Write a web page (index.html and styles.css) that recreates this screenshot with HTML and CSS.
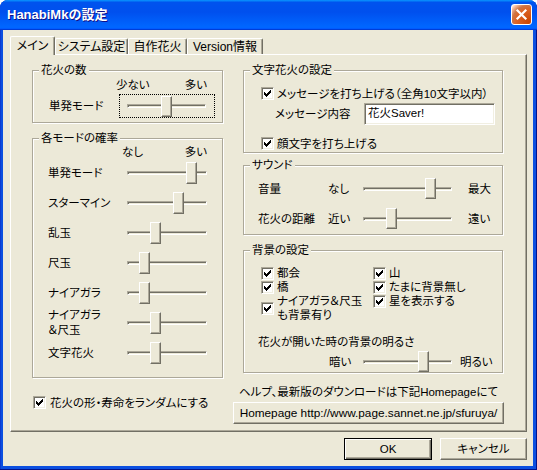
FILE: index.html
```html
<!DOCTYPE html>
<html lang="ja">
<head>
<meta charset="utf-8">
<title>HanabiMkの設定</title>
<link rel="stylesheet" href="styles.css">
</head>
<body>
<div class="window">
  <div class="titlebar">
    <span class="title">HanabiMkの設定</span>
    <span class="close"><svg width="13" height="13" viewBox="0 0 13 13"><path d="M2.5 2.5 L10.5 10.5 M10.5 2.5 L2.5 10.5" stroke="#fff" stroke-width="2.2" stroke-linecap="square"/></svg></span>
  </div>
  <div class="client">
    <div class="tabs">
      <div class="tab active tab-main">メイン</div>
      <div class="tab tab-sys">システム設定</div>
      <div class="tab tab-own">自作花火</div>
      <div class="tab tab-ver">Version情報</div>
    </div>
    <div class="panel">
      <div class="col">
        <div class="group g-count">
          <span class="legend">花火の数</span>
          <div class="scale-head count-head"><span>少ない</span><span>多い</span></div>
          <div class="count-row">
            <span class="count-label">単発モード</span>
            <div class="slider focus"><div class="track"></div><div class="thumb thumb-focus" style="left:41px"></div></div>
          </div>
        </div>
        <div class="group g-rate">
          <span class="legend">各モードの確率</span>
          <div class="scale-head rate-head"><span>なし</span><span>多い</span></div>
          <div class="srow"><span class="slabel">単発モード</span><div class="slider rate"><div class="track"></div><div class="thumb" style="left:59px"></div></div></div>
          <div class="srow"><span class="slabel">スターマイン</span><div class="slider rate"><div class="track"></div><div class="thumb" style="left:46px"></div></div></div>
          <div class="srow"><span class="slabel">乱玉</span><div class="slider rate"><div class="track"></div><div class="thumb" style="left:23px"></div></div></div>
          <div class="srow"><span class="slabel">尺玉</span><div class="slider rate"><div class="track"></div><div class="thumb" style="left:12px"></div></div></div>
          <div class="srow"><span class="slabel">ナイアガラ</span><div class="slider rate"><div class="track"></div><div class="thumb" style="left:12px"></div></div></div>
          <div class="srow"><span class="slabel two-line">ナイアガラ<br>＆尺玉</span><div class="slider rate"><div class="track"></div><div class="thumb" style="left:23px"></div></div></div>
          <div class="srow"><span class="slabel">文字花火</span><div class="slider rate"><div class="track"></div><div class="thumb" style="left:23px"></div></div></div>
        </div>
        <div class="check random">
          <span class="cb"><svg width="7" height="7" viewBox="0 0 7 7"><path d="M0 2h1v1h1v1h1v-1h1v-1h1v-1h1v-1h1v3h-1v1h-1v1h-1v1h-1v1h-1v-1h-1v-1h-1z"/></svg></span>
          <span>花火の形・寿命をランダムにする</span>
        </div>
      </div>

      <div class="col">
        <div class="group g-text">
          <span class="legend">文字花火の設定</span>
          <div class="check text-check first">
            <span class="cb"><svg width="7" height="7" viewBox="0 0 7 7"><path d="M0 2h1v1h1v1h1v-1h1v-1h1v-1h1v-1h1v3h-1v1h-1v1h-1v1h-1v1h-1v-1h-1v-1h-1z"/></svg></span>
            <span>メッセージを打ち上げる（全角10文字以内）</span>
          </div>
          <div class="msg-row">
            <span class="msg-label">メッセージ内容</span>
            <div class="input">花火Saver!</div>
          </div>
          <div class="check text-check last">
            <span class="cb"><svg width="7" height="7" viewBox="0 0 7 7"><path d="M0 2h1v1h1v1h1v-1h1v-1h1v-1h1v-1h1v3h-1v1h-1v1h-1v1h-1v1h-1v-1h-1v-1h-1z"/></svg></span>
            <span>顔文字を打ち上げる</span>
          </div>
        </div>

        <div class="group g-sound">
          <span class="legend">サウンド</span>
          <div class="snd-row first">
            <span class="snd-label">音量</span>
            <span class="snd-min">なし</span>
            <div class="slider wide"><div class="track"></div><div class="thumb thumb-sm" style="left:62px"></div></div>
            <span class="snd-max">最大</span>
          </div>
          <div class="snd-row second">
            <span class="snd-label">花火の距離</span>
            <span class="snd-min">近い</span>
            <div class="slider wide"><div class="track"></div><div class="thumb thumb-sm" style="left:23px"></div></div>
            <span class="snd-max">遠い</span>
          </div>
        </div>

        <div class="group g-bg">
          <span class="legend">背景の設定</span>
          <div class="bg-grid">
            <div class="check bg-item">
              <span class="cb"><svg width="7" height="7" viewBox="0 0 7 7"><path d="M0 2h1v1h1v1h1v-1h1v-1h1v-1h1v-1h1v3h-1v1h-1v1h-1v1h-1v1h-1v-1h-1v-1h-1z"/></svg></span>
              <span>都会</span>
            </div>
            <div class="check bg-item">
              <span class="cb"><svg width="7" height="7" viewBox="0 0 7 7"><path d="M0 2h1v1h1v1h1v-1h1v-1h1v-1h1v-1h1v3h-1v1h-1v1h-1v1h-1v1h-1v-1h-1v-1h-1z"/></svg></span>
              <span>山</span>
            </div>
            <div class="check bg-item">
              <span class="cb"><svg width="7" height="7" viewBox="0 0 7 7"><path d="M0 2h1v1h1v1h1v-1h1v-1h1v-1h1v-1h1v3h-1v1h-1v1h-1v1h-1v1h-1v-1h-1v-1h-1z"/></svg></span>
              <span>橋</span>
            </div>
            <div class="check bg-item">
              <span class="cb"><svg width="7" height="7" viewBox="0 0 7 7"><path d="M0 2h1v1h1v1h1v-1h1v-1h1v-1h1v-1h1v3h-1v1h-1v1h-1v1h-1v1h-1v-1h-1v-1h-1z"/></svg></span>
              <span>たまに背景無し</span>
            </div>
            <div class="check bg-item two">
              <span class="cb"><svg width="7" height="7" viewBox="0 0 7 7"><path d="M0 2h1v1h1v1h1v-1h1v-1h1v-1h1v-1h1v3h-1v1h-1v1h-1v1h-1v1h-1v-1h-1v-1h-1z"/></svg></span>
              <span class="two-text">ナイアガラ＆尺玉<br>も背景有り</span>
            </div>
            <div class="check bg-item">
              <span class="cb"><svg width="7" height="7" viewBox="0 0 7 7"><path d="M0 2h1v1h1v1h1v-1h1v-1h1v-1h1v-1h1v3h-1v1h-1v1h-1v1h-1v1h-1v-1h-1v-1h-1z"/></svg></span>
              <span>星を表示する</span>
            </div>
          </div>
          <div class="bright-label">花火が開いた時の背景の明るさ</div>
          <div class="bright-row">
            <span class="bright-min">暗い</span>
            <div class="slider wide"><div class="track"></div><div class="thumb thumb-sm" style="left:55px"></div></div>
            <span class="bright-max">明るい</span>
          </div>
        </div>

        <div class="help">ヘルプ、最新版のダウンロードは下記Homepageにて</div>
        <div class="btn homepage">Homepage http://www.page.sannet.ne.jp/sfuruya/</div>
      </div>
    </div>
    <div class="buttons">
      <div class="btn default btn-ok">OK</div>
      <div class="btn btn-cancel">キャンセル</div>
    </div>
  </div>
</div>
</body>
</html>
```
FILE: styles.css
```css
* { box-sizing: border-box; }
html, body { margin: 0; padding: 0; background: #ffffff; }
body {
  font-family: "Liberation Sans", "Noto Sans CJK JP", sans-serif;
  font-size: 11.5px;
  line-height: 12px;
  color: #000;
  font-feature-settings: "palt" 1;
}
.window {
  width: 537px;
  height: 470px;
  display: flex;
  flex-direction: column;
  background: #0b4fe0;
  border-radius: 8px 8px 0 0;
  overflow: hidden;
  box-shadow: inset -1px -1px 0 #00138c, inset 1px 0 0 #0c3bd0;
}
.titlebar {
  height: 30px;
  flex: none;
  display: flex;
  align-items: center;
  justify-content: space-between;
  padding: 0 5px 1px 7px;
  background: linear-gradient(180deg, #0997ff, #0053ee 8%, #0050ee 40%, #0066ff 88%, #0066ff 93%, #005bff 95%, #003dd7 96%, #003dd7);
}
.title {
  color: #fff;
  font-weight: bold;
  font-size: 13px;
  line-height: 14px;
  text-shadow: 1px 1px 0 #0f1089;
  font-feature-settings: normal;
}
.close {
  width: 21px;
  height: 21px;
  border: 1px solid #fff;
  border-radius: 3px;
  display: flex;
  align-items: center;
  justify-content: center;
  background: radial-gradient(circle at 90% 90%, #cc4600 0, #dc6527 55%, #cd7546 70%, #ffccb2 90%, #fff 100%);
}
.client {
  flex: 1;
  margin: 0 4px 4px 3px;
  background: #ece9d8;
  padding: 6px 6px 0 7px;
  display: flex;
  flex-direction: column;
}
.tabs {
  display: flex;
  align-items: flex-end;
  height: 18px;
  position: relative;
  z-index: 1;
}
.tab {
  height: 16px;
  display: flex;
  align-items: center;
  justify-content: center;
  border-top: 1px solid #fff;
  border-left: 1px solid #fff;
  border-right: 1px solid #716f64;
  box-shadow: inset -1px 0 0 #aca899;
  border-radius: 2px 2px 0 0;
  background: #ece9d8;
  padding-top: 1px;
  white-space: nowrap;
  font-size: 12px;
}
.tab.active { height: 19px; margin-bottom: -1px; padding-top: 0; padding-bottom: 1px; }
.tab-main { width: 45px; }
.tab-sys { width: 73px; }
.tab-own { width: 59px; }
.tab-ver { width: 76px; }

.panel {
  height: 378px;
  flex: none;
  border: 1px solid;
  border-color: #fff #716f64 #716f64 #fff;
  box-shadow: inset -1px -1px 0 #aca899;
  display: grid;
  grid-template-columns: 192px 261px;
  column-gap: 19px;
  padding-left: 21px;
  align-items: start;
}
.col { display: flex; flex-direction: column; }

.group {
  position: relative;
  width: calc(100% - 1px);
  border: 1px solid #aca899;
  box-shadow: inset 1px 1px 0 #fff, 1px 1px 0 #fff;
}
.legend {
  position: absolute;
  top: -7px;
  left: 6px;
  padding: 0 2px;
  background: #ece9d8;
  line-height: 12px;
  white-space: nowrap;
}
.g-count { margin-top: 15px; height: 53px; }
.g-rate { margin-top: 15px; height: 240px; }
.g-text { margin-top: 15px; height: 83px; }
.g-sound { margin-top: 12px; height: 70px; }
.g-bg { margin-top: 15px; height: 123px; }

.scale-head { display: flex; justify-content: space-between; }
.count-head { margin: 8px 0 0 83px; width: 91px; }
.rate-head { margin: 7px 0 0 89px; width: 85px; }

.count-row { display: flex; align-items: center; margin-top: 3px; height: 24px; padding-left: 16px; }
.count-label { width: 70px; flex: none; white-space: nowrap; }
.srow { display: flex; align-items: center; height: 30px; padding-left: 15px; }
.slabel { width: 79px; flex: none; white-space: nowrap; }
.two-line { line-height: 15px; }

.slider { position: relative; display: flex; align-items: center; height: 22px; flex: none; }
.slider.rate { width: 80px; }
.slider.wide { width: 89px; height: 21px; }
.slider.focus { width: 96px; height: 24px; border: 1px dotted #000; padding: 0 8px 0 7px; }
.track {
  flex: 1;
  height: 4px;
  border: 1px solid;
  border-color: #aca899 #fff #fff #aca899;
  background: #ece9d8;
  box-shadow: inset 1px 1px 0 #716f64;
}
.thumb {
  position: absolute;
  top: 0;
  width: 11px;
  height: 22px;
  background: #ece9d8;
  border: 1px solid;
  border-color: #fff #716f64 #716f64 #fff;
  box-shadow: inset -1px -1px 0 #aca899;
}
.thumb-focus { top: 1px; height: 21px; }
.thumb-sm { height: 21px; }

.check { display: flex; align-items: center; gap: 3px; height: 13px; white-space: nowrap; }
.cb {
  width: 13px;
  height: 13px;
  flex: none;
  border: 1px solid;
  border-color: #aca899 #fff #fff #aca899;
  box-shadow: inset 1px 1px 0 #716f64, inset -1px -1px 0 #f1efe2;
  background: #fff;
  display: flex;
  align-items: center;
  justify-content: center;
}
.cb svg { display: block; fill: #000; shape-rendering: crispEdges; }
.random { margin: 18px 0 0 1px; gap: 4px; }

.text-check { margin-left: 17px; }
.text-check.first { margin-top: 16px; }
.text-check.last { margin-top: 12px; }
.msg-row { display: flex; align-items: center; margin-top: 3px; height: 22px; padding-left: 31px; }
.msg-label { width: 89px; flex: none; white-space: nowrap; }
.input {
  width: 131px;
  height: 22px;
  border: 1px solid;
  border-color: #aca899 #fff #fff #aca899;
  box-shadow: inset 1px 1px 0 #716f64, inset -1px -1px 0 #f1efe2;
  background: #fff;
  padding: 3px 0 0 3px;
  white-space: nowrap;
}

.snd-row { display: flex; align-items: center; height: 21px; padding-left: 14px; }
.snd-row.first { margin-top: 12px; }
.snd-row.second { margin-top: 9px; }
.snd-label { width: 70px; flex: none; white-space: nowrap; }
.snd-min { width: 35px; flex: none; white-space: nowrap; }
.snd-max { margin-left: 16px; white-space: nowrap; }

.bg-grid { display: grid; grid-template-columns: 112px 1fr; margin: 15px 0 0 17px; align-items: start; }
.bg-item { height: 14px; }
.bg-item.two { height: 28px; }
.two-text { line-height: 14px; }
.bright-label { margin-top: 14px; padding-left: 14px; white-space: nowrap; }
.bright-row { display: flex; align-items: center; margin-top: 3px; height: 21px; padding-left: 85px; }
.bright-min { width: 34px; flex: none; white-space: nowrap; }
.bright-max { margin-left: 8px; white-space: nowrap; }

.help { margin: 13px 0 0 -10px; width: 271px; text-align: center; white-space: nowrap; }
.btn {
  display: flex;
  align-items: center;
  justify-content: center;
  background: #ece9d8;
  border: 1px solid;
  border-color: #fff #716f64 #716f64 #fff;
  box-shadow: inset -1px -1px 0 #aca899;
  height: 22px;
  white-space: nowrap;
}
.btn.default {
  border-color: #000;
  box-shadow: inset 1px 1px 0 #fff, inset -1px -1px 0 #716f64, inset -2px -2px 0 #aca899;
}
.homepage { margin: 4px 0 0 -10px; width: 271px; font-size: 11.8px; }
.buttons { display: flex; justify-content: flex-end; gap: 8px; margin-top: 6px; }
.btn-ok { width: 88px; }
.btn-cancel { width: 87px; }
```
